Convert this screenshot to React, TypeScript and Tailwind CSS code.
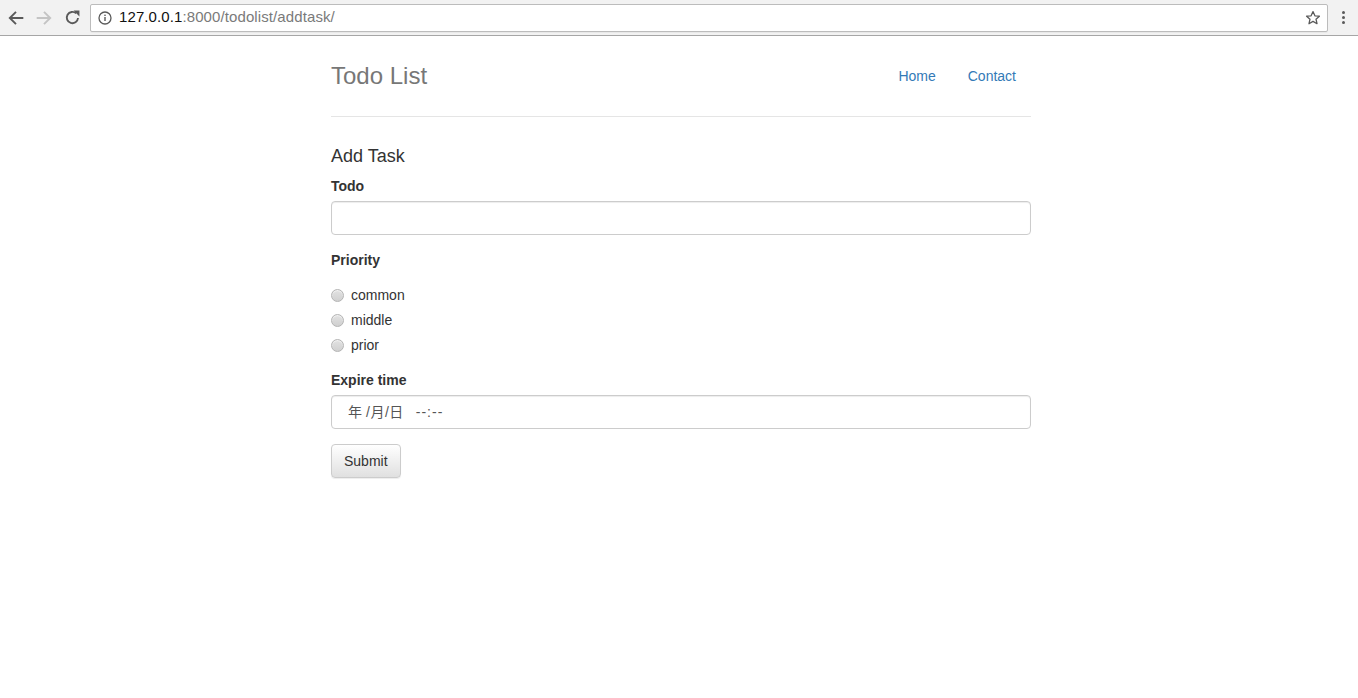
import React from "react";

const font = { fontFamily: '"Liberation Sans", Arial, "Noto Sans CJK SC", sans-serif' };

function BrowserBar() {
  return (
    <div className="flex items-center h-[36px] bg-[#f2f2f2] border-b border-[#a6a6a6] shrink-0">
      {/* Back */}
      <div className="w-[32px] flex justify-center">
        <svg width="18" height="18" viewBox="0 0 16 16">
          <path d="M14.5 8H2.5M8 2.5L2.5 8 8 13.5" fill="none" stroke="#5a5a5a" strokeWidth="1.7" />
        </svg>
      </div>
      {/* Forward */}
      <div className="w-[24px] flex justify-center">
        <svg width="18" height="18" viewBox="0 0 16 16">
          <path d="M1.5 8h12M8 2.5L13.5 8 8 13.5" fill="none" stroke="#c4c4c4" strokeWidth="1.7" />
        </svg>
      </div>
      {/* Reload */}
      <div className="w-[32px] flex justify-center">
        <svg width="17" height="17" viewBox="0 0 16 16">
          <path d="M13.2 8.5a5.3 5.3 0 1 1-1.7-4.4" fill="none" stroke="#5a5a5a" strokeWidth="1.8" />
          <path d="M9 1.5h5.5V7z" fill="#5a5a5a" />
        </svg>
      </div>
      {/* Address bar */}
      <div className="ml-[2px] flex items-center h-[28px] w-[1238px] bg-white border border-[#bcbcbc] rounded-[2px] shadow-[0_1px_0_rgba(0,0,0,0.04)]">
        <div className="w-[28px] flex justify-center">
          <svg width="14" height="14" viewBox="0 0 14 14">
            <circle cx="7" cy="7" r="6" fill="none" stroke="#5a5a5a" strokeWidth="1.3" />
            <rect x="6.3" y="6" width="1.4" height="4" fill="#5a5a5a" />
            <rect x="6.3" y="3.6" width="1.4" height="1.4" fill="#5a5a5a" />
          </svg>
        </div>
        <span className="text-[15px] text-[#7a7a7a] tracking-[0.1px]" style={font}>
          <span className="text-[#111]">127.0.0.1</span>:8000/todolist/addtask/
        </span>
        <div className="flex-1" />
        <div className="w-[28px] flex justify-center">
          <svg width="16" height="16" viewBox="0 0 16 16">
            <path
              d="M8 1.6l1.9 4.2 4.5.4-3.4 3 1 4.5L8 11.4l-4 2.3 1-4.5-3.4-3 4.5-.4z"
              fill="none"
              stroke="#5a5a5a"
              strokeWidth="1.3"
              strokeLinejoin="round"
            />
          </svg>
        </div>
      </div>
      {/* Menu */}
      <div className="flex-1 flex justify-center">
        <div className="flex flex-col gap-[2px]">
          <span className="w-[3px] h-[3px] rounded-full bg-[#5a5a5a]" />
          <span className="w-[3px] h-[3px] rounded-full bg-[#5a5a5a]" />
          <span className="w-[3px] h-[3px] rounded-full bg-[#5a5a5a]" />
        </div>
      </div>
    </div>
  );
}

function Radio({ label }: { label: string }) {
  return (
    <div className="flex items-center h-[20px]">
      <span className="w-[13px] h-[13px] rounded-full border border-[#b4b4b4] bg-gradient-to-b from-[#e2e2e2] to-[#d0d0d0] shadow-[inset_0_1px_1px_rgba(255,255,255,0.6)]" />
      <span className="ml-[7px] text-[14px] text-[#333]">{label}</span>
    </div>
  );
}

function Label({ children }: { children: React.ReactNode }) {
  return <div className="text-[14px] font-bold leading-[20px] text-[#333]">{children}</div>;
}

export default function App() {
  return (
    <div className="w-[1358px] h-[698px] bg-white flex flex-col overflow-hidden" style={font}>
      <BrowserBar />
      <div className="w-[700px] pt-[20px] ml-[331px]">
        {/* Header */}
        <div className="flex items-center justify-between pb-[20px] border-b border-[#e5e5e5]">
          <h3 className="text-[24px] leading-[40px] text-[#777]">Todo List</h3>
          <nav className="flex">
            <a className="px-[15px] py-[10px] leading-[20px] text-[14px] text-[#337ab7]">Home</a>
            <a className="ml-[2px] px-[15px] py-[10px] leading-[20px] text-[14px] text-[#337ab7]">Contact</a>
          </nav>
        </div>

        {/* Form */}
        <div className="pt-[29px]">
          <h4 className="text-[18px] leading-[20px] text-[#333]">Add Task</h4>
          <div className="mt-[10px]">
            <Label>Todo</Label>
            <div className="mt-[5px] h-[34px] border border-[#ccc] rounded-[4px] shadow-[inset_0_1px_1px_rgba(0,0,0,0.075)]" />
          </div>
          <div className="mt-[15px]">
            <Label>Priority</Label>
            <div className="mt-[15px] flex flex-col gap-[5px]">
              <Radio label="common" />
              <Radio label="middle" />
              <Radio label="prior" />
            </div>
          </div>
          <div className="mt-[15px]">
            <Label>Expire time</Label>
            <div className="mt-[5px] h-[34px] flex items-center pl-[16px] border border-[#ccc] rounded-[4px] shadow-[inset_0_1px_1px_rgba(0,0,0,0.075)] text-[14px] text-[#555]">
              <span>年</span>
              <span className="ml-[4px] tracking-[0.5px]">/月/日</span>
              <span className="ml-[12px] tracking-[1px]">--:--</span>
            </div>
          </div>
          <button className="mt-[15px] h-[34px] px-[12px] text-[14px] text-[#333] border border-[#ccc] rounded-[4px] bg-gradient-to-b from-white to-[#e0e0e0] shadow-[0_1px_1px_rgba(0,0,0,0.075)]">
            Submit
          </button>
        </div>
      </div>
    </div>
  );
}
